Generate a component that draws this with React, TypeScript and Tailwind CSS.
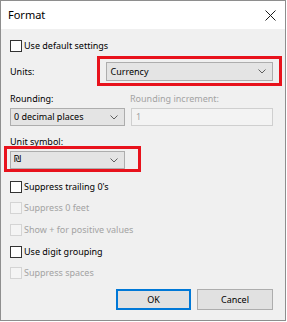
import React from "react";

const font = { fontFamily: '"Noto Sans", "DejaVu Sans", sans-serif' };

function Chevron() {
  return (
    <svg width="8" height="5" viewBox="0 0 8 5" className="shrink-0">
      <path d="M0.5 0.5 L4 4 L7.5 0.5" fill="none" stroke="#5f5f5f" strokeWidth="1" />
    </svg>
  );
}

function Combo({ value, className, valueClass = "" }: { value: string; className: string; valueClass?: string }) {
  return (
    <div
      className={`flex items-center justify-between border border-[#adadad] bg-[#e4e4e4] pl-[3px] pr-[6px] text-[9px] text-black ${className}`}
    >
      <span className={valueClass}>{value}</span>
      <Chevron />
    </div>
  );
}

function Check({ label, disabled, className }: { label: string; disabled?: boolean; className: string }) {
  return (
    <div className={`flex items-center gap-[2px] ${className}`}>
      <div
        className={`h-3 w-3 shrink-0 border ${
          disabled ? "border-[#d4d4d4] bg-[#f4f4f4]" : "border-[#333333] bg-white"
        }`}
      />
      <span className={`text-[9px] leading-3 ${disabled ? "text-[#a3a3a3]" : "text-black"}`}>{label}</span>
    </div>
  );
}

export default function App() {
  return (
    <div
      className="flex h-[321px] w-[286px] flex-col border border-[#8e8e8e] bg-white"
      style={font}
    >
      {/* Title bar */}
      <div className="flex h-[28px] shrink-0 items-center justify-between bg-white pl-[7px] pr-[9px]">
        <span className="text-[11px] text-black">Format</span>
        <svg width="11" height="11" viewBox="0 0 11 11">
          <path d="M0.5 0.5 L10.5 10.5 M10.5 0.5 L0.5 10.5" stroke="#1a1a1a" strokeWidth="1" />
        </svg>
      </div>

      {/* Body */}
      <div className="relative flex flex-1 flex-col bg-[#f0f0f0] pl-[9px] pr-[12px]">
        <Check label="Use default settings" className="mt-[11px] h-3" />

        <div className="mt-[10px] flex h-[19px] items-center">
          <span className="w-[98px] text-[9px] text-black">Units:</span>
          <Combo value="Currency" className="h-[19px] w-[169px]" />
        </div>

        <div className="mt-[12px] flex h-3 items-center text-[9px]">
          <span className="w-[120px] text-black">Rounding:</span>
          <span className="text-[#a3a3a3]">Rounding increment:</span>
        </div>

        <div className="mt-[3px] flex h-[18px] items-center">
          <Combo value="0 decimal places" className="h-[18px] w-[115px]" />
          <div className="ml-[6px] flex h-[18px] w-[142px] items-center border border-[#cfcfcf] bg-[#f3f3f3] pl-[4px] text-[9px] text-[#a3a3a3]">
            1
          </div>
        </div>

        <div className="mt-[10px] flex h-3 items-center text-[9px] text-black">Unit symbol:</div>
        <Combo
          value="₪"
          valueClass="font-['DejaVu_Sans',sans-serif] text-[9px]"
          className="mt-[3px] h-[18px] w-[115px]"
        />

        <Check label="Suppress trailing 0's" className="mt-[12px] h-3" />
        <Check label="Suppress 0 feet" disabled className="mt-[9px] h-3" />
        <Check label="Show + for positive values" disabled className="mt-[10px] h-3" />
        <Check label="Use digit grouping" className="mt-[10px] h-3" />
        <Check label="Suppress spaces" disabled className="mt-[9px] h-3" />

        <div className="mt-[10px] flex justify-end gap-[6px]">
          <button className="flex h-[21px] w-[75px] items-center justify-center border-2 border-[#0078d7] bg-[#e1e1e1] text-[9px] text-black">
            OK
          </button>
          <button className="flex h-[21px] w-[76px] items-center justify-center border border-[#adadad] bg-[#e1e1e1] text-[9px] text-black">
            Cancel
          </button>
        </div>

        {/* Red annotation boxes */}
        <div className="pointer-events-none absolute left-[96px] top-[27px] h-[30px] w-[185px] border-[3px] border-[#e8121c]" />
        <div className="pointer-events-none absolute left-[3px] top-[117px] h-[26px] w-[137px] border-[3px] border-[#e8121c]" />
      </div>
    </div>
  );
}
